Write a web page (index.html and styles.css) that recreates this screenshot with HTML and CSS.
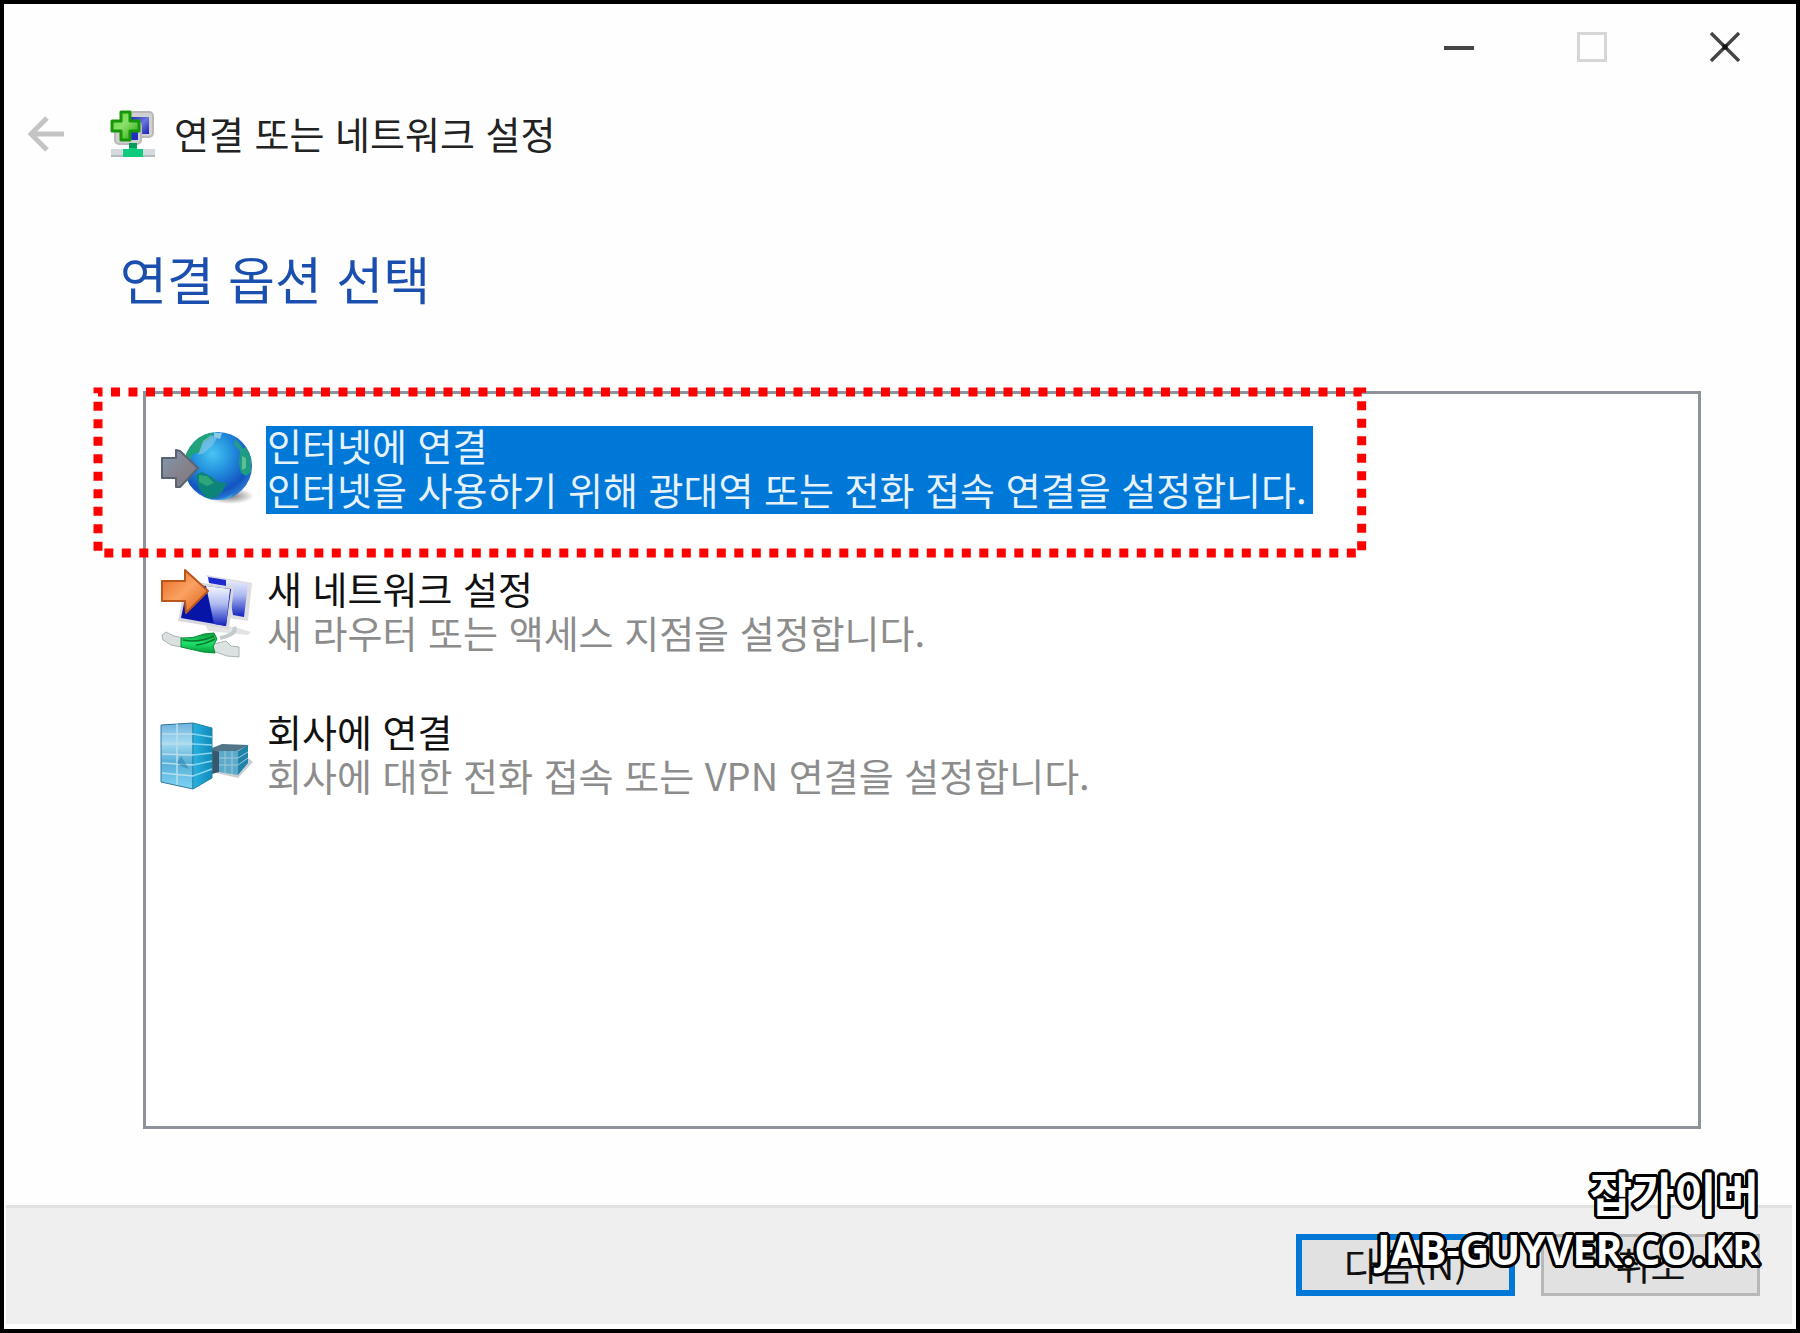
FILE: index.html
```html
<!DOCTYPE html>
<html lang="ko">
<head>
  <meta charset="UTF-8" />
  <meta name="viewport" content="width=device-width, initial-scale=1.0"/>
  <title>연결 또는 네트워크 설정</title>
  <link rel="stylesheet" href="styles.css">
</head>
<body>

  <div class="window">
    <div class="titlebar">
      <button type="button" class="win-btn" aria-label="최소화">
        <svg width="30" height="30" viewBox="0 0 30 30"><path d="M0 16h30" stroke="#444" stroke-width="4"/></svg>
      </button>
      <button type="button" class="win-btn" aria-label="최대화" disabled>
        <svg width="30" height="30" viewBox="0 0 30 30"><rect x="1.5" y="1.5" width="27" height="27" fill="none" stroke="#d6d6d6" stroke-width="3"/></svg>
      </button>
      <button type="button" class="win-btn" aria-label="닫기">
        <svg width="30" height="30" viewBox="0 0 30 30"><path d="M1 1l28 28M29 1L1 29" stroke="#444" stroke-width="3.4"/><rect x="12.500" y="12.500" width="5" height="5" fill="#111"/></svg>
      </button>
    </div>

    <header class="header">
      <button type="button" class="back-btn" aria-label="뒤로" disabled>
        <svg width="36" height="36" viewBox="0 0 36 36"><path d="M36 18H3M19 2L3 18l16 16" fill="none" stroke="#c4c4c4" stroke-width="5"/></svg>
      </button>
      <svg class="header-icon" width="46" height="48" viewBox="0 0 46 48">
        <defs>
          <linearGradient id="plus" x1="0" y1="0" x2="1" y2="1">
            <stop offset="0" stop-color="#5fd32f"/><stop offset=".45" stop-color="#8be06a"/><stop offset="1" stop-color="#1fa30c"/>
          </linearGradient>
          <linearGradient id="screen" x1="0" y1="0" x2="1" y2="1">
            <stop offset="0" stop-color="#2029b0"/><stop offset=".5" stop-color="#6a76dc"/><stop offset="1" stop-color="#1a22b4"/>
          </linearGradient>
        </defs>
        <rect x="14" y="2" width="29" height="25" rx="4" fill="#d0d0d0" stroke="#b9b9b9" stroke-width="2"/>
        <rect x="20" y="7" width="19" height="17" fill="url(#screen)"/>
        <rect x="5" y="12" width="26" height="22" rx="4" fill="#d0d0d0" stroke="#b9b9b9" stroke-width="2"/>
        <rect x="10" y="17" width="18" height="13" fill="#1f2fc4"/>
        <rect x="1" y="39" width="44" height="8" fill="#d3dadd"/>
        <path d="M1 46h44" stroke="#b4bcc0" stroke-width="2"/>
        <path d="M19 33h8v6h6v8H13v-8h6z" fill="#0ccb7c"/>
        <path d="M19 33h8v5h-8z" fill="#079a5c"/>
        <path d="M11 2h9v9h9v10h-9v9h-9v-9H2V11h9z" fill="url(#plus)" stroke="#16970a" stroke-width="3" stroke-linejoin="round"/>
      </svg>
      <span class="header-title">연결 또는 네트워크 설정</span>
    </header>

    <main class="content">
      <h1>연결 옵션 선택</h1>

      <div class="option-list">
        <button type="button" class="option selected">
          <svg class="option-icon" width="92" height="88" viewBox="0 0 92 88">
            <defs>
              <radialGradient id="ocean" cx=".42" cy=".32" r=".7">
                <stop offset="0" stop-color="#48c5f3"/><stop offset=".4" stop-color="#2390de"/><stop offset=".8" stop-color="#1354c0"/><stop offset="1" stop-color="#2d7fd6"/>
              </radialGradient>
              <radialGradient id="shade">
                <stop offset="0" stop-color="#777"/><stop offset="1" stop-color="#777" stop-opacity="0"/>
              </radialGradient>
              <linearGradient id="greyArrow" x1="0" y1="0" x2="1" y2="1">
                <stop offset="0" stop-color="#8299b0"/><stop offset=".6" stop-color="#858088"/><stop offset="1" stop-color="#6f8197"/>
              </linearGradient>
              <clipPath id="globe"><circle cx="58" cy="40" r="34"/></clipPath>
            </defs>
            <ellipse cx="70" cy="70" rx="24" ry="8" fill="url(#shade)"/>
            <circle cx="58" cy="40" r="34" fill="url(#ocean)"/>
            <g clip-path="url(#globe)">
              <path d="M24 32L28 14 44 4l10 1-3 7-8 5-3 9-8 3-3 8z" fill="#20a27a"/>
              <path d="M43 15l8-6 6 3-4 7-9 8-6 2z" fill="#8ccbe5" opacity=".6"/>
              <path d="M54 7h8l-2 6-6-2z" fill="#8cc9e4"/>
              <path d="M36 49l6-3 10 5 6 5 9 1-5 9-7 6h-8l-8-9z" fill="#0c8478"/>
              <path d="M39 49l8 1 7 7-7 3-8-4z" fill="#2fa57a"/>
              <path d="M80 24l6-3 5 10v15l-5 4-5-3-2-9z" fill="#1e9c82"/>
              <path d="M82 30l4 2v10l-4 2z" fill="#5cc095"/>
              <path d="M75 13l6 6 3 7-4-1-6-7z" fill="#249b8c"/>
              <path d="M45 72q14 4 28-4l-4 8H47z" fill="#45b2e8" opacity=".65"/>
            </g>
            <path d="M2 32h14v-8l4 1 18 17-18 19h-4v-9H2z" fill="url(#greyArrow)" stroke="#596372" stroke-width="2" stroke-linejoin="round"/>
          </svg>
          <span class="option-text">
            <span class="option-title">인터넷에 연결</span>
            <span class="option-desc">인터넷을 사용하기 위해 광대역 또는 전화 접속 연결을 설정합니다.</span>
          </span>
          <svg class="marker"><rect width="100%" height="100%" fill="none" stroke="#f00" stroke-width="9" stroke-dasharray="9 8.500" stroke-dashoffset="4.500"/></svg>
        </button>

        <button type="button" class="option">
          <svg class="option-icon" width="92" height="88" viewBox="0 0 92 88">
            <defs>
              <linearGradient id="orange" x1="0" y1="0" x2="1" y2="1">
                <stop offset="0" stop-color="#e8661c"/><stop offset=".5" stop-color="#fba263"/><stop offset="1" stop-color="#d9590f"/>
              </linearGradient>
              <linearGradient id="glare" x1="0" y1="0" x2="0" y2="1">
                <stop offset="0" stop-color="#f4f7ff"/><stop offset=".45" stop-color="#aebbf1"/><stop offset="1" stop-color="#1122bd"/>
              </linearGradient>
              <linearGradient id="green" x1="0" y1="0" x2="0" y2="1">
                <stop offset="0" stop-color="#0a9c3c"/><stop offset=".5" stop-color="#1ee36c"/><stop offset="1" stop-color="#089a3b"/>
              </linearGradient>
            </defs>
            <path d="M45 55l30 3 16 5-3 3-40-4z" fill="#e4e4e4"/>
            <path d="M46 6l46 8-4 38-20-3z" fill="#dedee2"/>
            <path d="M48 8l40 7-4 33-11-2-5-28-19-4z" fill="url(#glare)"/>
            <path d="M48 8l18 3v6l-17-3z" fill="#1c2ad0"/>
            <path d="M26 12l48 6-5 42-51-8z" fill="#d8d8dc"/>
            <path d="M28 15l43 5-5 37-45-8z" fill="#0614a8"/>
            <path d="M46 17l24 3-4 37-12-2z" fill="url(#glare)"/>
            <path d="M60 69q18-4 14-11" fill="none" stroke="#c3cbcd" stroke-width="4"/>
            <path d="M2 66l4-3 8 4 9 2-2 9-10-2-8-5z" fill="#d9e0df" stroke="#aab5b5"/>
            <path d="M54 75l12-3 5 5 8 1v10l-12-1-14-5z" fill="#dbe3e2" stroke="#aab5b5"/>
            <path d="M21 69q12 1 23-4l10-1 3 6-4 7 2 7-12-1-22-5z" fill="url(#green)" stroke="#078a35"/>
            <path d="M23 71q17 3 31-4M36 76q10-1 19-6" fill="none" stroke="#09792f" stroke-width="1.500"/>
            <path d="M2 12h23V1l23 21-22 22-1-12H2z" fill="url(#orange)" stroke="#b9571c" stroke-width="2" stroke-linejoin="round"/>
          </svg>
          <span class="option-text">
            <span class="option-title">새 네트워크 설정</span>
            <span class="option-desc">새 라우터 또는 액세스 지점을 설정합니다.</span>
          </span>
        </button>

        <button type="button" class="option">
          <svg class="option-icon" width="92" height="88" viewBox="0 0 92 88">
            <defs>
              <linearGradient id="front" x1="0" y1="0" x2="0" y2="1">
                <stop offset="0" stop-color="#6fb2df"/><stop offset=".3" stop-color="#a5daf0"/><stop offset=".6" stop-color="#55aed8"/><stop offset="1" stop-color="#7fd4f4"/>
              </linearGradient>
              <linearGradient id="side" x1="0" y1="0" x2="1" y2="0">
                <stop offset="0" stop-color="#27b3e2"/><stop offset="1" stop-color="#1189b8"/>
              </linearGradient>
            </defs>
            <path d="M52 60l26 6 15-16-5-4-36 5z" fill="#b5b9bc" opacity=".7"/>
            <path d="M52 36l10-4 27 1-12 6-19 1-6 6z" fill="#53758a"/>
            <path d="M52 38l7 2v20l-7 2z" fill="#38576a"/>
            <path d="M59 39h19v24l-19-3z" fill="#5da9cb"/>
            <path d="M78 39l10-6v18L78 63z" fill="#2083a8"/>
            <path d="M59 46h19l10-6M59 53h19l10-7M65 39v22M72 39v23" fill="none" stroke="#9ccbdc"/>
            <path d="M1 13l32-2 19 5-20 5z" fill="#5d91bd"/>
            <path d="M1 13l32-2v66L1 70z" fill="url(#front)" stroke="#347998"/>
            <path d="M33 11l19 5v50L33 77z" fill="url(#side)" stroke="#2587a6"/>
            <path d="M2 22h31M2 32h31M2 42l31 1M2 51l31 2M2 61l31 3M17 12v61" fill="none" stroke="#b9deea" stroke-width="1.500"/>
            <path d="M33 22l19 3M33 32l19 1M33 43l19-2M33 53l19-4M33 64l19-7" fill="none" stroke="#87d6ed" stroke-width="1.500"/>
            <path d="M17 51l4-7 8 13-6-2z" fill="#2e86b2" opacity=".6"/>
          </svg>
          <span class="option-text">
            <span class="option-title">회사에 연결</span>
            <span class="option-desc">회사에 대한 전화 접속 또는 VPN 연결을 설정합니다.</span>
          </span>
        </button>
      </div>
    </main>

    <footer class="footer">
      <button type="button" class="btn btn-default">다음(N)</button>
      <button type="button" class="btn">취소</button>
    </footer>

    <div class="watermark">
      <div class="watermark-name">잡가이버</div>
      <div class="watermark-url">JAB-GUYVER.CO.KR</div>
    </div>
  </div>

</body>
</html>
```

FILE: styles.css
```css
* {
  margin: 0;
  padding: 0;
  box-sizing: border-box;
}

body {
  font-family: 'Noto Sans CJK KR', sans-serif;
  font-size: 38px;
  line-height: 38px;
  color: #111;
  background-color: #fff;
}

button {
  font: inherit;
  color: inherit;
  background: none;
  border: none;
}

svg {
  display: block;
  flex-shrink: 0;
}

.window {
  position: relative;
  display: flex;
  flex-direction: column;
  min-height: 100vh;
  border: 4px solid #000;
  background-color: #fefefe;
}

.titlebar {
  display: flex;
  justify-content: flex-end;
  padding-right: 5px;
}

.win-btn {
  display: flex;
  align-items: center;
  justify-content: center;
  width: 133px;
  height: 86px;
}

.header {
  display: flex;
  align-items: center;
  height: 88px;
  padding-left: 24px;
}

.header-icon {
  margin: 0 18px 0 46px;
}

.header-title {
  padding-bottom: 2px;
  color: #222;
}

.content {
  flex: 1;
  display: flex;
  flex-direction: column;
  padding: 70px 95px 76px 116px;
}

h1 {
  font-size: 51px;
  line-height: 60px;
  font-weight: 400;
  color: #1a4fb0;
}

.option-list {
  flex: 1;
  display: flex;
  flex-direction: column;
  align-items: flex-start;
  gap: 55px;
  margin: 83px 0 0 23px;
  padding: 32px 14px;
  border: 3px solid #8d929b;
  background-color: #fff;
}

.option {
  position: relative;
  display: flex;
  gap: 14px;
  text-align: left;
}

.option-icon {
  overflow: visible;
}

.option-title,
.option-desc {
  display: block;
  padding: 0 6px 6px 1px;
}

.option-desc {
  color: #8c8c8c;
}

.selected .option-text {
  background-color: #0078d7;
}

.selected .option-title,
.selected .option-desc {
  color: #e6f2fc;
}

/* red dotted frame round the selected option */
.marker {
  position: absolute;
  top: -34px;
  left: -62px;
  width: calc(100% + 111px);
  height: 161px;
  overflow: visible;
  pointer-events: none;
}

.footer {
  display: flex;
  justify-content: flex-end;
  gap: 26px;
  margin: 0 4px 5px 2px;
  padding: 26px 32px 28px;
  border-top: 3px solid #e2e2e2;
  background-color: #efefef;
}

.btn {
  width: 219px;
  height: 62px;
  padding-bottom: 3px;
  border: 3px solid #b8b8b8;
  background-color: #e1e1e1;
}

.btn-default {
  border: 6px solid #0078d7;
}

/* the outline is made of shadows so it stays behind every letter */
.watermark {
  position: absolute;
  right: 37px;
  bottom: 51px;
  text-align: right;
  font-weight: 700;
  color: #fff;
  text-shadow:
    3px 0 #000, -3px 0 #000, 0 3px #000, 0 -3px #000,
    3px 1px #000, 3px -1px #000, -3px 1px #000, -3px -1px #000,
    1px 3px #000, -1px 3px #000, 1px -3px #000, -1px -3px #000,
    2px 2px #000, 2px -2px #000, -2px 2px #000, -2px -2px #000;
  pointer-events: none;
}

.watermark-name {
  font-size: 46px;
  line-height: 58px;
}

.watermark-url {
  font-family: 'Open Sans', 'Noto Sans', sans-serif;
  font-size: 41px;
  font-weight: 700;
  line-height: 58px;
}
```
